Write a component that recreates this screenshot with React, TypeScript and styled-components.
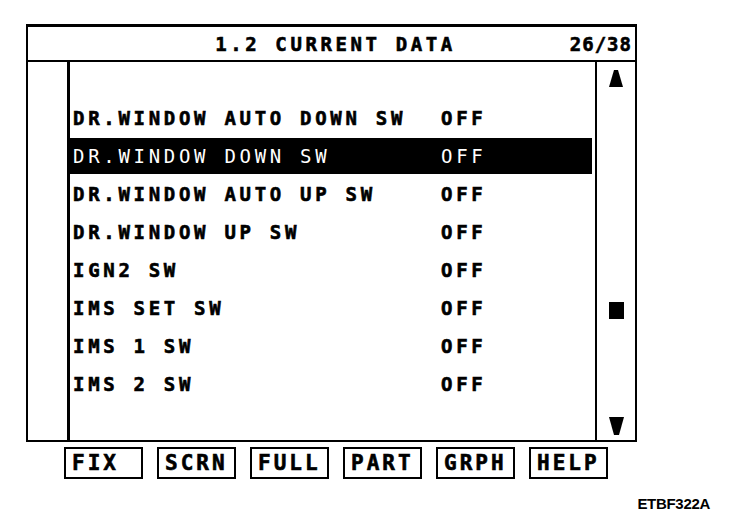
import * as React from "react";
import styled, { createGlobalStyle } from "styled-components";

const GlobalStyle = createGlobalStyle`
  html, body {
    margin: 0;
    padding: 0;
    background: #fff;
  }
  body {
    width: 736px;
    height: 522px;
    overflow: hidden;
  }
`;

const mono = `"DejaVu Sans Mono", "Liberation Mono", monospace`;

const Page = styled.div`
  position: relative;
  width: 736px;
  height: 522px;
  padding: 24px 0 0 26px;
  box-sizing: border-box;
  background: #fff;
  color: #000;
`;

const Panel = styled.div`
  width: 611px;
  box-sizing: border-box;
  border-top: 3px solid #000;
  border-left: 2px solid #000;
  border-right: 2px solid #000;
  border-bottom: 2px solid #000;
  display: flex;
  flex-direction: column;
`;

const Header = styled.div`
  height: 33px;
  border-bottom: 2px solid #000;
  display: flex;
  align-items: center;
  justify-content: center;
  position: relative;
  font-family: ${mono};
  font-weight: 700;
  font-size: 19px;
  letter-spacing: 3.6px;
  -webkit-text-stroke: 0.6px #000;
`;

const Title = styled.div`
  margin-left: 8px;
`;

const Counter = styled.div`
  position: absolute;
  right: 3px;
  top: 50%;
  transform: translateY(-50%);
  letter-spacing: 1px;
`;

const Body = styled.div`
  height: 378px;
  display: flex;
`;

const Gutter = styled.div`
  width: 39px;
  border-right: 3px solid #000;
`;

const List = styled.div`
  flex: 1;
  padding-top: 37px;
  padding-right: 3px;
  border-right: 2px solid #000;
`;

const Row = styled.div`
  height: 38px;
  padding: 1px 0;
  box-sizing: border-box;
`;

interface BarProps {
  $selected: boolean;
}

const Bar = styled.div<BarProps>`
  height: 36px;
  display: flex;
  align-items: center;
  padding-left: 3px;
  font-family: ${mono};
  font-weight: ${({ $selected }) => ($selected ? 400 : 700)};
  font-size: 19px;
  letter-spacing: 3.7px;
  white-space: pre;
  background: ${({ $selected }) => ($selected ? "#000" : "transparent")};
  color: ${({ $selected }) => ($selected ? "#fff" : "#000")};
  -webkit-text-stroke: ${({ $selected }) => ($selected ? "0" : "0.6px #000")};
`;

const Label = styled.span`
  width: 368px;
  flex: none;
`;

const Value = styled.span``;

const Scroll = styled.div`
  width: 38px;
  display: flex;
  flex-direction: column;
  align-items: center;
  padding-top: 8px;
  box-sizing: border-box;
`;

const Thumb = styled.div`
  width: 15px;
  height: 17px;
  background: #000;
  margin: 215px 0 98px;
`;

const Buttons = styled.div`
  display: flex;
  gap: 14px;
  margin: 5px 0 0 38px;
`;

const Key = styled.div`
  width: 79px;
  height: 32px;
  box-sizing: border-box;
  border: 2px solid #000;
  display: flex;
  align-items: center;
  padding-left: 6px;
  font-family: ${mono};
  font-weight: 700;
  font-size: 21px;
  letter-spacing: 3px;
  -webkit-text-stroke: 0.6px #000;
`;

const Code = styled.div`
  position: absolute;
  right: 26px;
  top: 495px;
  font-family: "Liberation Sans", Arial, sans-serif;
  font-weight: 700;
  font-size: 15px;
  letter-spacing: -0.3px;
`;

const rows: { label: string; value: string; selected?: boolean }[] = [
  { label: "DR.WINDOW AUTO DOWN SW", value: "OFF" },
  { label: "DR.WINDOW DOWN SW", value: "OFF", selected: true },
  { label: "DR.WINDOW AUTO UP SW", value: "OFF" },
  { label: "DR.WINDOW UP SW", value: "OFF" },
  { label: "IGN2 SW", value: "OFF" },
  { label: "IMS SET SW", value: "OFF" },
  { label: "IMS 1 SW", value: "OFF" },
  { label: "IMS 2 SW", value: "OFF" },
];

const keys = ["FIX", "SCRN", "FULL", "PART", "GRPH", "HELP"];

const UpArrow = () => (
  <svg width="14" height="17" viewBox="0 0 14 17">
    <polygon points="5,0 9,0 14,17 0,17" fill="#000" />
  </svg>
);

const DownArrow = () => (
  <svg width="15" height="18" viewBox="0 0 15 18">
    <polygon points="0,0 15,0 10,18 5,18" fill="#000" />
  </svg>
);

export default function App() {
  return (
    <Page>
      <GlobalStyle />
      <Panel>
        <Header>
          <Title>1.2 CURRENT DATA</Title>
          <Counter>26/38</Counter>
        </Header>
        <Body>
          <Gutter />
          <List>
            {rows.map((r) => (
              <Row key={r.label}>
                <Bar $selected={!!r.selected}>
                  <Label>{r.label}</Label>
                  <Value>{r.value}</Value>
                </Bar>
              </Row>
            ))}
          </List>
          <Scroll>
            <UpArrow />
            <Thumb />
            <DownArrow />
          </Scroll>
        </Body>
      </Panel>
      <Buttons>
        {keys.map((k) => (
          <Key key={k}>{k}</Key>
        ))}
      </Buttons>
      <Code>ETBF322A</Code>
    </Page>
  );
}
